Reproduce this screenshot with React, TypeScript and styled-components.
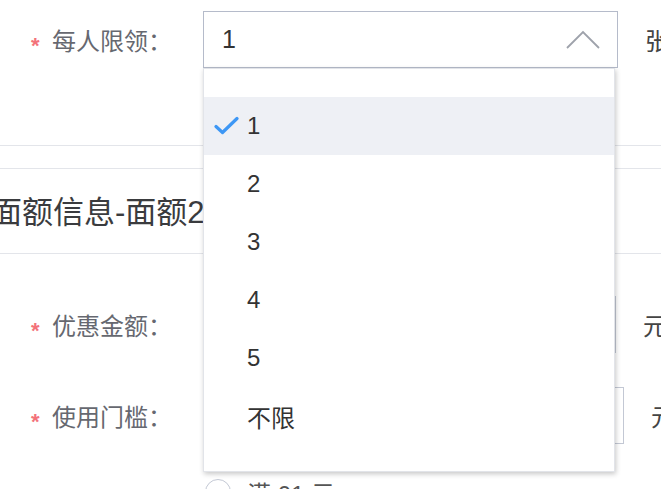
import React from "react";
import styled, {createGlobalStyle} from "styled-components";

const GlobalStyle = createGlobalStyle`
  html, body {
    margin: 0;
    padding: 0;
    background: #fff;
  }

  body {
    font-family: "Liberation Sans", "Noto Sans CJK SC", sans-serif;
  }
`

const options = ["1", "2", "3", "4", "5", "不限"];

export default function App() {
    return (
        <Page>
            <GlobalStyle/>
            <Section>
                <FormRow>
                    <Label><Star>*</Star>每人限领：</Label>
                    <SelectWrap>
                        <SelectBox>
                            <SelectValue>1</SelectValue>
                            <svg width="34" height="19" viewBox="0 0 34 19">
                                <polyline points="1,18 17,2 33,18" fill="none" stroke="#9ea2ab" strokeWidth="1.8"/>
                            </svg>
                        </SelectBox>
                        <Dropdown>
                            {options.map(o => (
                                <Option key={o} $selected={o === "1"}>
                                    {o === "1" &&
                                        <Check width="25" height="19" viewBox="0 0 25 19">
                                            <path d="M2 10.5 L8.5 16.5 L23 2.5" fill="none" stroke="#3d97f5"
                                                  strokeWidth="3.2" strokeLinecap="round" strokeLinejoin="round"/>
                                        </Check>
                                    }
                                    {o}
                                </Option>
                            ))}
                        </Dropdown>
                    </SelectWrap>
                    <Unit>张</Unit>
                </FormRow>
            </Section>
            <HeadingBar>面额信息-面额2</HeadingBar>
            <Fields>
                <FormRow>
                    <Label><Star>*</Star>优惠金额：</Label>
                    <Input $width={413}/>
                    <Unit>元</Unit>
                </FormRow>
                <FormRow>
                    <Label><Star>*</Star>使用门槛：</Label>
                    <Input $width={421}/>
                    <Unit>元</Unit>
                </FormRow>
                <RadioRow>
                    <Radio/>
                    <RadioText>满 01 元</RadioText>
                </RadioRow>
            </Fields>
        </Page>
    );
}

const Page = styled.div`
  width: 661px;
  height: 489px;
  overflow: hidden;
  padding-top: 11px;
  box-sizing: border-box;
`

const Section = styled.div`
  padding-bottom: 77px;
  border-bottom: 1px solid #e3e5ea;
  margin-bottom: 22px;
`

const FormRow = styled.div`
  display: flex;
  align-items: center;
  height: 57px;
`

const Label = styled.div`
  width: 203px;
  flex-shrink: 0;
  box-sizing: border-box;
  padding-left: 31px;
  display: flex;
  align-items: center;
  font-size: 24px;
  color: #666870;
`

const Star = styled.span`
  color: #f3727a;
  font-size: 22px;
  font-weight: bold;
  width: 21px;
  height: 24px;
  line-height: 36px;
`

const SelectWrap = styled.div`
  position: relative;
  width: 415px;
  height: 57px;
  flex-shrink: 0;
`

const SelectBox = styled.div`
  height: 100%;
  box-sizing: border-box;
  border: 1.5px solid #b5bbca;
  display: flex;
  align-items: center;
  justify-content: space-between;
  padding: 0 17px 0 18px;
`

const SelectValue = styled.span`
  font-size: 25px;
  color: #333;
`

const Dropdown = styled.ul`
  position: absolute;
  top: 100%;
  left: 0;
  width: 412px;
  margin: 0;
  padding: 28px 0 26px;
  list-style: none;
  background: #fff;
  box-sizing: border-box;
  border: 1px solid #e2e4e9;
  box-shadow: 1px 2px 5px rgba(0, 0, 0, 0.22);
  z-index: 5;
`

const Option = styled.li<{ $selected?: boolean }>`
  position: relative;
  height: 58px;
  display: flex;
  align-items: center;
  padding-left: 43px;
  font-size: 24px;
  color: #333;
  background: ${p => p.$selected ? "#eef0f5" : "transparent"};
`

const Check = styled.svg`
  position: absolute;
  left: 10px;
  top: 19px;
`

const Unit = styled.span`
  margin-left: 27px;
  font-size: 24px;
  color: #444;
  white-space: nowrap;
`

const HeadingBar = styled.div`
  border-top: 1px solid #e3e5ea;
  border-bottom: 1px solid #e3e5ea;
  height: 84px;
  line-height: 88px;
  text-indent: -9px;
  font-size: 31px;
  color: #3a3b3e;
  white-space: nowrap;
`

const Fields = styled.div`
  padding-top: 42px;
  display: flex;
  flex-direction: column;
  gap: 34px;
`

const Input = styled.div<{ $width: number }>`
  width: ${p => p.$width}px;
  height: 57px;
  box-sizing: border-box;
  border: 1.5px solid #c3c8d4;
  flex-shrink: 0;
`

const RadioRow = styled.div`
  display: flex;
  align-items: center;
  padding-left: 205px;
  gap: 16px;
  height: 28px;
`

const Radio = styled.span`
  width: 26px;
  height: 26px;
  border-radius: 50%;
  border: 1.5px solid #c3c8d4;
  box-sizing: border-box;
`

const RadioText = styled.span`
  font-size: 24px;
  color: #555;
`
